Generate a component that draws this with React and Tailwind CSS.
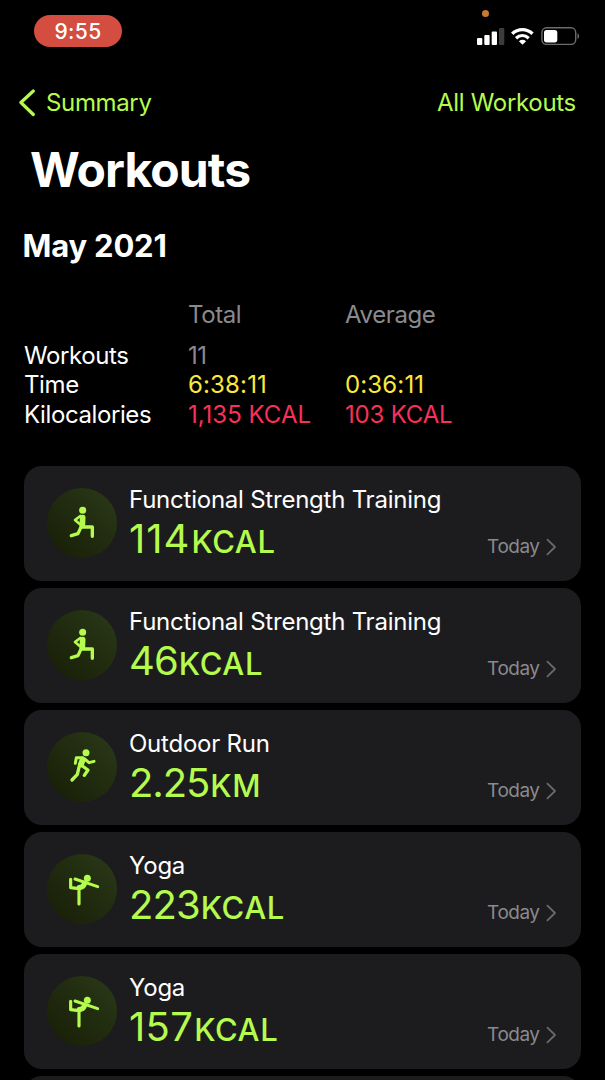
const workouts = [
    { id: 1, type: 'strength', name: 'Functional Strength Training', value: '114', unit: 'KCAL', date: 'Today', spacing: 'tracking-[1px]' },
    { id: 2, type: 'strength', name: 'Functional Strength Training', value: '46', unit: 'KCAL', date: 'Today', spacing: 'tracking-[-0.9px]' },
    { id: 3, type: 'run', name: 'Outdoor Run', value: '2.25', unit: 'KM', date: 'Today', spacing: 'tracking-[-1.1px]' },
    { id: 4, type: 'yoga', name: 'Yoga', value: '223', unit: 'KCAL', date: 'Today', spacing: 'tracking-[-0.9px]' },
    { id: 5, type: 'yoga', name: 'Yoga', value: '157', unit: 'KCAL', date: 'Today', spacing: 'tracking-[0.3px]' },
];

export default function App() {
    return (
        <div className="h-[1080px] w-[605px] overflow-hidden bg-black font-['Inter',sans-serif] text-white">
            <StatusBar />
            <nav className="mt-[26px] flex h-[30px] items-center justify-between pl-[17px] pr-[29px] text-[24px] leading-[30px] text-[#b5fb4e]">
                <a className="flex items-center">
                    <svg className="mr-[11px] h-[30px] w-[18px]" viewBox="0 0 18 30" fill="none">
                        <path
                            d="M16.3 3 3.9 14.5 16.3 26.5"
                            stroke="currentColor"
                            strokeWidth="3.2"
                            strokeLinecap="round"
                            strokeLinejoin="round"
                        />
                    </svg>
                    <span className="tracking-[-0.35px]">Summary</span>
                </a>
                <a className="tracking-[-0.3px]">All Workouts</a>
            </nav>
            <h1 className="mt-[24px] pl-[30px] text-[48px] font-bold leading-[56px] tracking-[-0.9px]">
                Workouts
            </h1>
            <h2 className="mt-[30px] pl-[22.5px] text-[31px] font-bold leading-[36px] tracking-[-0.2px]">
                May 2021
            </h2>
            <Summary />
            <main className="mt-[37px] flex flex-col gap-[7px] px-6">
                {workouts.map((workout) => (
                    <WorkoutCard key={workout.id} workout={workout} />
                ))}
                <div className="h-[115px] shrink-0 rounded-[18px] bg-[#1c1c1e]" />
            </main>
        </div>
    );
}

function StatusBar() {
    return (
        <header className="relative flex h-[62px] items-start justify-between pl-[34px] pr-[25px] pt-[15px]">
            <div className="flex h-8 w-[88px] items-center justify-center rounded-full bg-[#d34d40] pt-0.5 text-[21px] font-medium leading-8 tracking-[0.4px]">
                9:55
            </div>
            <span className="absolute left-[482px] top-[10px] size-[7px] rounded-full bg-[#c67c2c]" />
            <div className="mt-[12px] flex items-start">
                <svg className="mr-[6px] h-[18px] w-[28px]" viewBox="0 0 28 18">
                    <rect x="0" y="11" width="5.3" height="7" rx="1" fill="#fff" />
                    <rect x="7.3" y="8" width="5.3" height="10" rx="1" fill="#fff" />
                    <rect x="14.7" y="4.5" width="5.3" height="13.5" rx="1" fill="#fff" />
                    <rect x="22" y="1" width="5.3" height="17" rx="1" fill="#3c3c3c" />
                </svg>
                <svg className="mr-[7px] h-[18px] w-[23px]" viewBox="0 0 23 18" fill="none">
                    <path d="M1.2 6.7C7 1.2 15.7 1.2 21.5 6.7" stroke="#fff" strokeWidth="3.4" />
                    <path d="M5 11.2C8.8 7.8 13.9 7.8 17.7 11.2" stroke="#fff" strokeWidth="3.2" />
                    <path d="M7.9 14.2C10 12.4 13 12.4 15.1 14.2L11.5 17.8Z" fill="#fff" />
                </svg>
                <svg className="h-[18px] w-[39px]" viewBox="0 0 39 18">
                    <rect x="0.9" y="0.8" width="33.8" height="16.6" rx="4.6" fill="none" stroke="#6c6c6c" strokeWidth="1.4" />
                    <rect x="3" y="3" width="13.3" height="12.4" rx="2.6" fill="#fff" />
                    <path d="M36.5 6.2C38.6 7 38.6 11.2 36.5 12Z" fill="#6c6c6c" />
                </svg>
            </div>
        </header>
    );
}

function Summary() {
    return (
        <section className="mt-[36px] grid grid-cols-[164px_157px_1fr] grid-rows-[41px_29px_30px_29px] pl-6 text-[24px] leading-[29px] tracking-[-0.4px]">
            <span />
            <span className="text-[#8a8a8e]">Total</span>
            <span className="text-[#8a8a8e]">Average</span>
            <span>Workouts</span>
            <span className="text-[#8a8a8e]">11</span>
            <span />
            <span>Time</span>
            <span className="tracking-[0.15px] text-[#fbe83c]">6:38:11</span>
            <span className="tracking-[0.15px] text-[#fbe83c]">0:36:11</span>
            <span>Kilocalories</span>
            <span className="tracking-normal text-[#f8305a]">1,135 KCAL</span>
            <span className="tracking-[-0.2px] text-[#f8305a]">103 KCAL</span>
        </section>
    );
}

function WorkoutCard({ workout }) {
    return (
        <article className="flex h-[115px] shrink-0 rounded-[18px] bg-[#1c1c1e] pl-[23px] pr-6">
            <div className="mt-[22px] size-[70px] shrink-0 rounded-full bg-linear-to-tr from-[#171d06] to-[#2b3a19]">
                <WorkoutIcon type={workout.type} />
            </div>
            <div className="ml-3 flex-1 pt-5">
                <div className="whitespace-nowrap text-[24px] leading-[28px] tracking-[-0.23px]">
                    {workout.name}
                </div>
                <div className="mt-px flex h-12 items-baseline text-[40px] leading-[48px] text-[#b5fb4e]">
                    <span className={workout.spacing}>{workout.value}</span>
                    <span className="ml-px text-[31px] font-medium tracking-[0.6px]">{workout.unit}</span>
                </div>
            </div>
            <div className="mt-[69px] flex h-6 items-center text-[19px] leading-6 tracking-[-0.5px] text-[#8a8a8e]">
                {workout.date}
                <svg className="ml-[5.5px] h-[18px] w-[12px]" viewBox="0 0 12 18" fill="none">
                    <path
                        d="M2.4 1.7 10 9 2.4 16.3"
                        stroke="#69696d"
                        strokeWidth="1.8"
                        strokeLinecap="round"
                        strokeLinejoin="round"
                    />
                </svg>
            </div>
        </article>
    );
}

function WorkoutIcon({ type }) {
    return (
        <svg
            className="size-[70px]"
            viewBox="0 0 210 210"
            fill="none"
            stroke="#b5fb4e"
            strokeWidth="10"
            strokeLinecap="round"
            strokeLinejoin="round"
        >
            {type === 'strength' && (
                <>
                    <circle cx="107" cy="67" r="10.5" fill="#b5fb4e" stroke="none" />
                    <path d="M107 89 106 112" strokeWidth="17" />
                    <path d="M100 84 84 96 99 109" strokeWidth="8" />
                    <path d="M104 117H136V145" />
                    <path d="M103 115 93 137 73 143" />
                </>
            )}
            {type === 'run' && (
                <>
                    <circle cx="117" cy="62" r="10.5" fill="#b5fb4e" stroke="none" />
                    <path d="M107 83 102 97" strokeWidth="18" />
                    <path d="M107 77H88L85 94" strokeWidth="9" />
                    <path d="M113 81 126 92 141 88" strokeWidth="9" />
                    <path d="M102 99 123 114 112 130" />
                    <path d="M98 98 91 127 75 144" />
                </>
            )}
            {type === 'yoga' && (
                <>
                    <circle cx="121" cy="73" r="10.5" fill="#b5fb4e" stroke="none" />
                    <path d="M84 75 152 98" strokeWidth="9" />
                    <path d="M71 76V101L96 104V150" strokeWidth="9.5" />
                    <path d="M112 90Q109 99 97 101" strokeWidth="16" />
                </>
            )}
        </svg>
    );
}
